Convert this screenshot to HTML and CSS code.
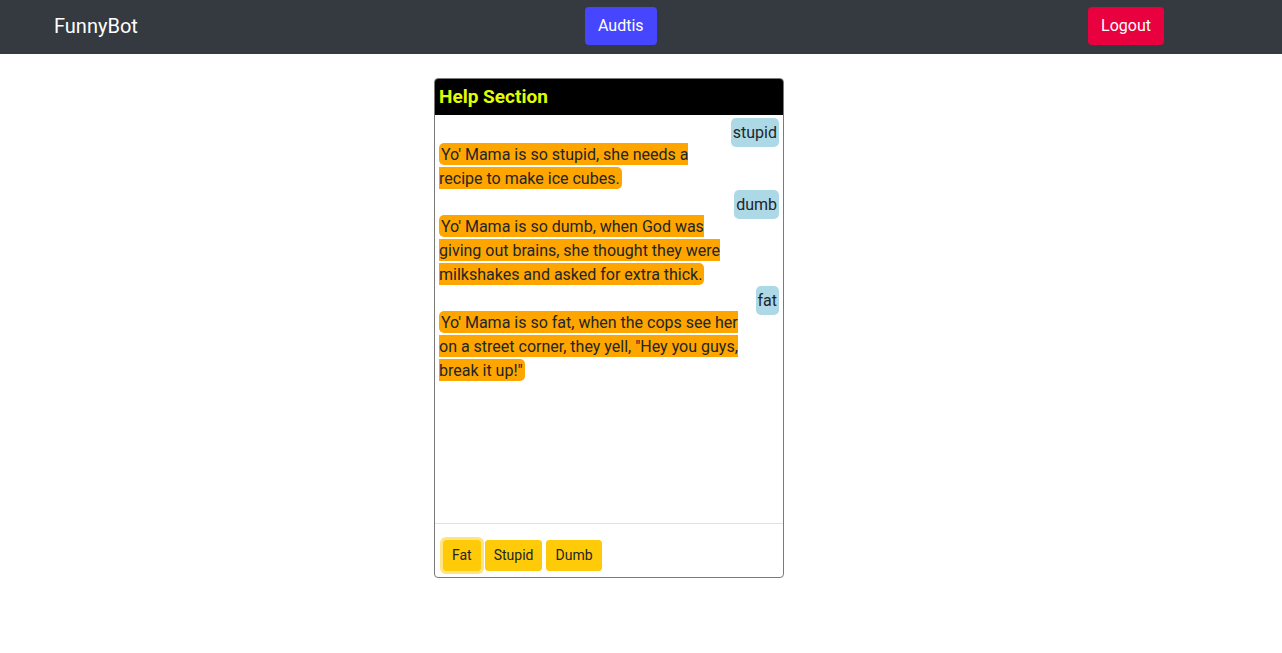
FILE: index.html
```html
<!DOCTYPE html>
<html lang="en">
<head>
<meta charset="utf-8">
<title>FunnyBot</title>
<link rel="stylesheet" href="styles.css">
</head>
<body>
<nav class="navbar">
  <div class="brand">FunnyBot</div>
  <button class="btn btn-audits">Audtis</button>
  <button class="btn btn-logout">Logout</button>
</nav>
<main class="page">
  <section class="card">
    <header class="card-header">Help Section</header>
    <div class="chat">
      <div class="msg user"><span class="bubble">stupid</span></div>
      <div class="msg bot"><span class="bubble">Yo' Mama is so stupid, she needs a<br>recipe to make ice cubes.</span></div>
      <div class="msg user"><span class="bubble">dumb</span></div>
      <div class="msg bot"><span class="bubble">Yo' Mama is so dumb, when God was giving out brains, she thought they were milkshakes and asked for extra thick.</span></div>
      <div class="msg user"><span class="bubble">fat</span></div>
      <div class="msg bot"><span class="bubble">Yo' Mama is so fat, when the cops see her on a street corner, they yell, "Hey you guys, break it up!"</span></div>
    </div>
    <footer class="card-footer">
      <button class="chip chip-focus">Fat</button>
      <button class="chip">Stupid</button>
      <button class="chip">Dumb</button>
    </footer>
  </section>
</main>
</body>
</html>
```
FILE: styles.css
```css
* { box-sizing: border-box; }
html, body { margin: 0; padding: 0; }
body {
  font-family: Roboto, "Liberation Sans", sans-serif;
  font-size: 16px;
  line-height: 24px;
  color: #212529;
  background: #fff;
}
.navbar {
  height: 54px;
  background: #343a40;
  display: flex;
  align-items: center;
  padding: 0 118px 2px 54px;
}
.brand {
  width: 531px;
  font-size: 20px;
  line-height: 30px;
  color: #fff;
}
.btn {
  font-family: inherit;
  font-size: 16px;
  line-height: 24px;
  padding: 6px 12px;
  border: 1px solid transparent;
  border-radius: 4px;
  color: #fff;
  cursor: pointer;
}
.btn-audits { background: #4646ff; }
.btn-logout { background: #e9003f; margin-left: auto; }

.page { padding-top: 24px; padding-left: 434px; }
.card {
  width: 350px;
  height: 500px;
  border: 1px solid #7a7a7a;
  border-radius: 4px;
  overflow: hidden;
  display: flex;
  flex-direction: column;
}
.card-header {
  height: 36px;
  flex: none;
  background: #000;
  color: #e0ff00;
  font-weight: 700;
  font-size: 19px;
  display: flex;
  align-items: center;
  padding: 0 4px;
}
.chat {
  height: 408px;
  flex: none;
  padding: 3px 4px 0 4px;
}
.user { text-align: right; }
.user .bubble {
  background: #add8e6;
  padding: 5px 2px;
  border-radius: 5px;
  line-height: 16px;
  vertical-align: -3px;
}
.bot { width: 300px; }
.bot .bubble {
  background: #ffa500;
  padding: 1.5px 2px;
  border-radius: 5px;
}
.card-footer {
  flex: 1;
  border-top: 1px solid #dee2e6;
  display: flex;
  align-items: flex-start;
  gap: 4px;
  padding: 16px 8px 0 8px;
}
.chip {
  font-family: inherit;
  font-size: 14px;
  line-height: 21px;
  padding: 4px 8px;
  border: 1px solid #ffca08;
  border-radius: 3px;
  background: #ffca08;
  color: #212529;
}
.chip-focus { box-shadow: 0 0 0 3px rgba(255, 202, 8, 0.5); }
```
